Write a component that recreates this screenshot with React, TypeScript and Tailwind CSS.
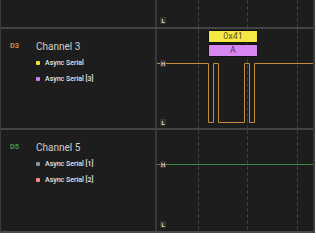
import React from 'react';

type Legend = { color: string; label: string };

interface Channel {
  tag: string;
  tagColor: string;
  name: string;
  legends: Legend[];
}

const GRID_X = [41, 90, 140];

function Grid({ height }: { height: number }) {
  return (
    <>
      {GRID_X.map((x) => (
        <line
          key={x}
          x1={x + 0.5}
          x2={x + 0.5}
          y1={0}
          y2={height}
          stroke="#3e3e3e"
          strokeWidth={1}
          strokeDasharray="4 2"
        />
      ))}
    </>
  );
}

function Level({ text, top }: { text: string; top: number }) {
  return (
    <span
      className="absolute left-[3px] w-[6px] h-[7px] flex items-center justify-center bg-[#333333] text-[6px] font-bold leading-none text-[#dedede]"
      style={{ top: top - 3 }}
    >
      {text}
    </span>
  );
}

function Info({ ch }: { ch: Channel }) {
  return (
    <div className="w-[156px] shrink-0 border-r-2 border-[#383838] pt-[11px] flex flex-col gap-[6px]">
      <div className="h-[12px] flex items-center pl-[9px]">
        <span className="w-[26px] text-[7.5px] font-bold" style={{ color: ch.tagColor }}>
          {ch.tag}
        </span>
        <span className="text-[10px] text-[#cfcfcf]">{ch.name}</span>
      </div>
      {ch.legends.map((l) => (
        <div key={l.label} className="h-[10px] flex items-center pl-[35px] gap-[5px]">
          <span className="w-[4px] h-[4px] rounded-[1px]" style={{ background: l.color }} />
          <span className="text-[7px] font-medium text-[#e6e6e6]">{l.label}</span>
        </div>
      ))}
    </div>
  );
}

const ch3: Channel = {
  tag: 'D3',
  tagColor: '#c98a3c',
  name: 'Channel 3',
  legends: [
    { color: '#f2e33c', label: 'Async Serial' },
    { color: '#d57ef0', label: 'Async Serial [3]' },
  ],
};

const ch5: Channel = {
  tag: 'D5',
  tagColor: '#3f9a4c',
  name: 'Channel 5',
  legends: [
    { color: '#8c90a6', label: 'Async Serial [1]' },
    { color: '#f08a8a', label: 'Async Serial [2]' },
  ],
};

export default function App() {
  // 0x41, LSB first: start 0, 1,0,0,0,0,0,1,0, stop 1
  const wave = 'M0 34.5 H51.5 V93.5 H56.5 V34.5 H61.5 V93.5 H87.5 V34.5 H92.5 V93.5 H97.5 V34.5 H156';

  return (
    <div className="w-[316px] h-[240px] bg-white" style={{ fontFamily: 'Roboto, "Liberation Sans", sans-serif' }}>
      <div className="w-[315px] bg-[#1d1d1d] border-l border-r-2 border-[#3a3a3a]">
        {/* partial row on top */}
        <div className="flex h-[29px] border-b-2 border-[#444444]">
          <div className="w-[156px] shrink-0 border-r-2 border-[#383838]" />
          <div className="relative flex-1">
            <svg className="absolute inset-0" width="100%" height="100%">
              <Grid height={29} />
            </svg>
            <Level text="L" top={20} />
          </div>
        </div>

        {/* Channel 3 */}
        <div className="flex h-[101px] border-b-2 border-[#444444]">
          <Info ch={ch3} />
          <div className="relative flex-1">
            <svg className="absolute inset-0" width="100%" height="100%">
              <Grid height={101} />
              <path d={wave} fill="none" stroke="#c48a40" strokeWidth={1} />
            </svg>
            <div className="absolute left-[51px] top-[1px] w-[50px] flex flex-col gap-[1px]">
              <div className="h-[13px] bg-[#f5e845] border border-[#111] flex items-center justify-center text-[9px] text-[#5c5523]">
                0x41
              </div>
              <div className="h-[13px] bg-[#d887f2] border border-[#111] flex items-center justify-center text-[9px] text-[#5a2f70]">
                A
              </div>
            </div>
            <Level text="H" top={34} />
            <Level text="L" top={93} />
          </div>
        </div>

        {/* Channel 5 */}
        <div className="flex h-[103px] border-b-2 border-[#4a4a4a]">
          <Info ch={ch5} />
          <div className="relative flex-1">
            <svg className="absolute inset-0" width="100%" height="100%">
              <Grid height={103} />
              <line x1={0} x2={156} y1={34.5} y2={34.5} stroke="#3f8a45" strokeWidth={1} />
            </svg>
            <Level text="H" top={34} />
            <Level text="L" top={94} />
          </div>
        </div>
      </div>
    </div>
  );
}
